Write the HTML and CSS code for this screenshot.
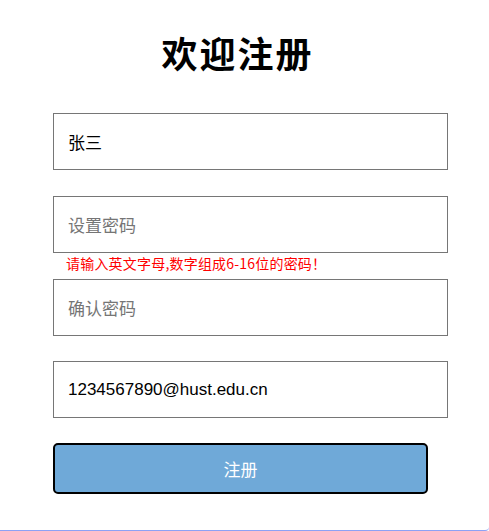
FILE: index.html
```html
<!DOCTYPE html>
<html lang="zh-CN">
<head>
<meta charset="utf-8">
<title>欢迎注册</title>
<link rel="stylesheet" href="styles.css">
</head>
<body>
<div class="page">
  <h1 class="title">欢迎注册</h1>
  <form class="form">
    <div class="field">
      <input class="input" type="text" value="张三">
      <div class="msg"></div>
    </div>
    <div class="field">
      <input class="input" type="password" placeholder="设置密码">
      <div class="msg">请输入英文字母,数字组成6-16位的密码！</div>
    </div>
    <div class="field">
      <input class="input" type="password" placeholder="确认密码">
      <div class="msg"></div>
    </div>
    <div class="field">
      <input class="input email" type="text" value="1234567890@hust.edu.cn">
      <div class="msg"></div>
    </div>
    <button class="btn" type="button">注册</button>
  </form>
</div>
</body>
</html>
```
FILE: styles.css
```css
html, body {
  margin: 0;
  padding: 0;
  background: #fff;
}
body {
  font-family: "Noto Sans CJK SC", "Noto Sans", sans-serif;
}
.page {
  height: 530px;
  border-bottom: 1px solid #8ea2f5;
  border-bottom-right-radius: 4px;
  overflow: hidden;
}
.title {
  margin: 0;
  padding: 26px 14px 0 0;
  height: 83px;
  box-sizing: border-box;
  text-align: center;
  font-size: 36px;
  line-height: 52px;
  font-weight: 700;
  letter-spacing: 2px;
  color: #000;
}
.form {
  padding: 30px 0 0 53px;
  display: flex;
  flex-direction: column;
}
.field {
  display: flex;
  flex-direction: column;
  height: 83px;
}
.field:nth-child(n+3) {
  margin-top: -0.4px;
}
.input {
  box-sizing: border-box;
  width: 395px;
  height: 57px;
  margin: 0;
  padding: 0 14px;
  border: 1px solid #767676;
  border-radius: 0;
  font-family: "Noto Sans CJK SC", sans-serif;
  font-size: 17px;
  color: #000;
  outline: none;
  background: #fff;
}
.input::placeholder {
  color: #757575;
}
.email {
  font-family: "Liberation Sans", "Noto Sans CJK SC", sans-serif;
  font-size: 17px;
}
.msg {
  height: 26px;
  padding-left: 13px;
  font-size: 14px;
  line-height: 20px;
  letter-spacing: 0.2px;
  color: #f00;
}
.btn {
  box-sizing: border-box;
  width: 375px;
  height: 51px;
  margin-top: -1px;
  border: 2px solid #000;
  border-radius: 5px;
  background: #6fa9d8;
  color: #fff;
  font-family: "Noto Sans CJK SC", sans-serif;
  font-size: 17px;
  padding: 0;
}
```
